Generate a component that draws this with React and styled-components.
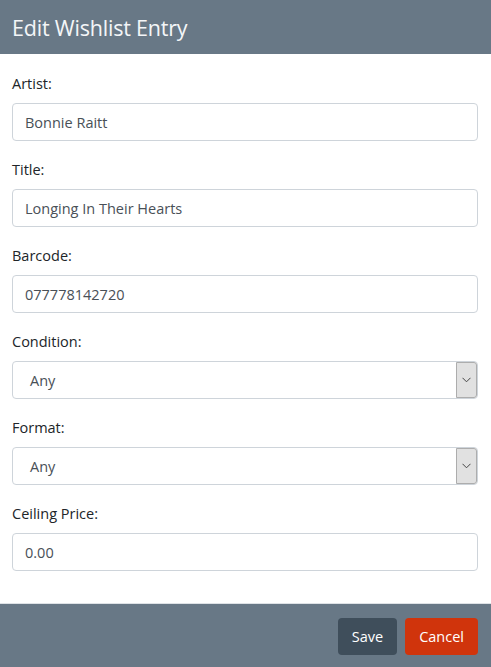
import styled, { createGlobalStyle } from 'styled-components';

const GlobalStyle = createGlobalStyle`
   * { box-sizing: border-box; }
   body {
      margin: 0;
      background: #ffffff;
      font-family: "Open Sans", "Noto Sans", sans-serif;
   }
`;

const Modal = styled.div`
   width: 491px;
   height: 667px;
   display: flex;
   flex-direction: column;
   background: #ffffff;
`;

const Header = styled.div`
   flex-shrink: 0;
   height: 54px;
   background: #687886;
   display: flex;
   align-items: center;
   padding: 0 12px;
`;

const HeaderTitle = styled.h2`
   margin: 0;
   font-size: 21.5px;
   font-weight: 400;
   color: #f4f6f8;
   letter-spacing: -0.2px;
`;

const Body = styled.form`
   flex: 1;
   padding: 20px 13px 0 12px;
   display: flex;
   flex-direction: column;
   gap: 19px;
`;

const Group = styled.div`
   display: flex;
   flex-direction: column;
   gap: 9px;
`;

const Label = styled.label`
   font-size: 14.5px;
   line-height: 20px;
   color: #212529;
`;

const Input = styled.input`
   height: 38px;
   width: 100%;
   border: 1px solid #ced4da;
   border-radius: 4px;
   padding: 0 12px;
   font-family: inherit;
   font-size: 14.5px;
   color: #495057;
   background: #fff;
   outline: none;
`;

const SelectBox = styled.div`
   height: 38px;
   width: 100%;
   border: 1px solid #ced4da;
   border-radius: 4px;
   display: flex;
   align-items: stretch;
   background: #fff;
`;

const SelectValue = styled.div`
   flex: 1;
   display: flex;
   align-items: center;
   padding-left: 17px;
   font-size: 14.5px;
   color: #495057;
`;

const ArrowBox = styled.div`
   width: 21px;
   background: #e1e1e1;
   border: 1px solid #adadad;
   border-radius: 0 3px 3px 0;
   display: flex;
   align-items: center;
   justify-content: center;
`;

const Footer = styled.div`
   flex-shrink: 0;
   height: 64px;
   background: #687886;
   border-top: 1px solid #dee2e6;
   display: flex;
   justify-content: flex-end;
   align-items: center;
   gap: 8px;
   padding: 0 13px 0 0;
`;

const Button = styled.button`
   height: 37px;
   padding: 0 14px;
   border: none;
   border-radius: 4px;
   font-family: inherit;
   font-size: 14.5px;
   color: #ffffff;
   background: ${(p) => (p.$danger ? '#d0340c' : '#3f4e5b')};
   margin-top: 2px;
`;

function Select({ value }) {
   return (
      <SelectBox>
         <SelectValue>{value}</SelectValue>
         <ArrowBox>
            <svg width="9" height="6" viewBox="0 0 9 6">
               <path d="M0.5 0.8 L4.5 4.8 L8.5 0.8" fill="none" stroke="#444" strokeWidth="1" />
            </svg>
         </ArrowBox>
      </SelectBox>
   );
}

export default function App() {
   return (
      <Modal>
         <GlobalStyle />
         <Header>
            <HeaderTitle>Edit Wishlist Entry</HeaderTitle>
         </Header>
         <Body>
            <Group>
               <Label>Artist:</Label>
               <Input defaultValue="Bonnie Raitt" />
            </Group>
            <Group>
               <Label>Title:</Label>
               <Input defaultValue="Longing In Their Hearts" />
            </Group>
            <Group>
               <Label>Barcode:</Label>
               <Input defaultValue="077778142720" />
            </Group>
            <Group>
               <Label>Condition:</Label>
               <Select value="Any" />
            </Group>
            <Group>
               <Label>Format:</Label>
               <Select value="Any" />
            </Group>
            <Group>
               <Label>Ceiling Price:</Label>
               <Input defaultValue="0.00" />
            </Group>
         </Body>
         <Footer>
            <Button type="button">Save</Button>
            <Button type="button" $danger>Cancel</Button>
         </Footer>
      </Modal>
   );
}
